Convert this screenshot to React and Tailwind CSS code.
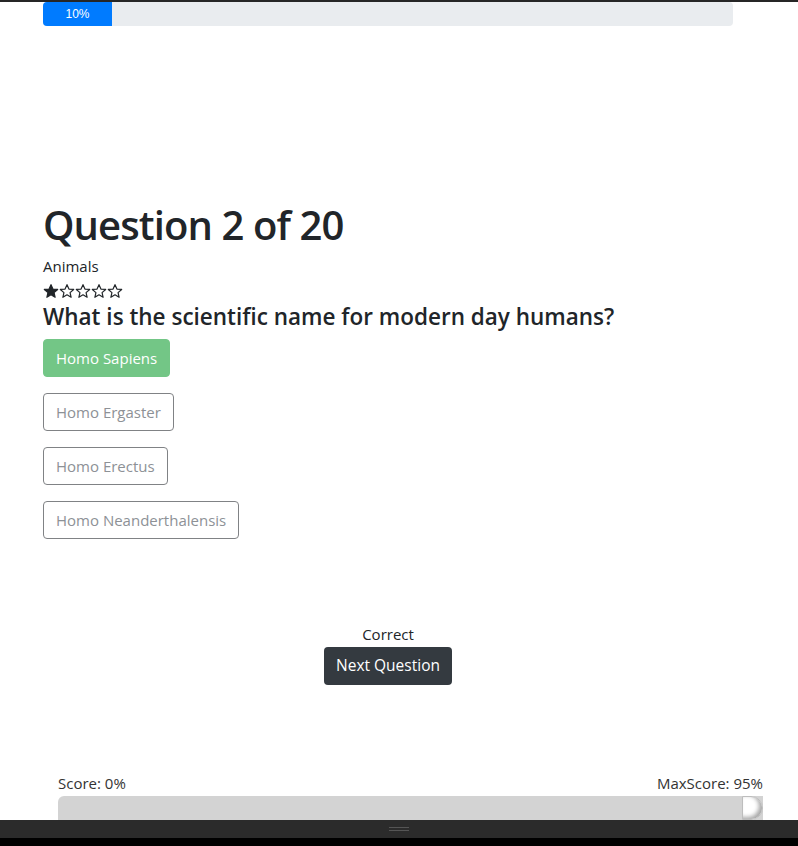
import React from "react";

const ANSWERS = [
  { label: "Homo Sapiens", correct: true },
  { label: "Homo Ergaster" },
  { label: "Homo Erectus" },
  { label: "Homo Neanderthalensis" },
];

function Star({ filled }) {
  return (
    <svg width="16" height="16" viewBox="0 0 24 24" className="shrink-0">
      <path
        d="M12 2.5l2.9 6.6 7.1.6-5.4 4.7 1.6 7-6.2-3.7-6.2 3.7 1.6-7L2 9.7l7.1-.6z"
        fill={filled ? "#212529" : "none"}
        stroke="#212529"
        strokeWidth="1.8"
        strokeLinejoin="round"
      />
    </svg>
  );
}

export default function App() {
  const difficulty = 1;
  return (
    <div className="h-screen flex flex-col bg-white text-[#212529] font-['Open_Sans',sans-serif] overflow-hidden">
      <div className="h-[2px] bg-[#262626] shrink-0" />

      <div className="px-[43px] pr-[65px]">
        <div className="h-6 rounded bg-[#e9ecef] flex overflow-hidden">
          <div className="w-[10%] bg-[#007bff] text-white text-xs flex items-center justify-center font-['Liberation_Sans',sans-serif]">
            10%
          </div>
        </div>
      </div>

      <div className="flex-1 flex flex-col">
        <div className="px-[43px] mt-[175px]">
          <h1 className="text-[40px] leading-[48px] font-semibold tracking-[-0.9px]">Question 2 of 20</h1>
          <div className="mt-[5px] text-[15px] leading-6">Animals</div>
          <div className="mt-[4px] flex items-center h-[18px]">
            {[1, 2, 3, 4, 5].map((n) => (
              <Star key={n} filled={n <= difficulty} />
            ))}
          </div>
          <h2 className="mt-[2px] text-[22.5px] leading-[30px] font-semibold">
            What is the scientific name for modern day humans?
          </h2>
          <div className="mt-[7px] flex flex-col items-start gap-4">
            {ANSWERS.map((a) =>
              a.correct ? (
                <button
                  key={a.label}
                  disabled
                  className="h-[38px] px-3 rounded bg-[#73c686] border border-[#73c686] text-white text-[15px]"
                >
                  {a.label}
                </button>
              ) : (
                <button
                  key={a.label}
                  disabled
                  className="h-[38px] px-3 rounded bg-white border border-[#808285] text-[#8d9196] text-[15px]"
                >
                  {a.label}
                </button>
              )
            )}
          </div>
        </div>

        <div className="mt-[85px] pr-[22px] flex flex-col items-center">
          <div className="text-[15px] leading-[20px]">Correct</div>
          <button className="mt-[3px] h-[38px] px-3 rounded bg-[#343a40] text-white text-[15.5px]">
            Next Question
          </button>
        </div>

        <div className="mt-auto pl-[58px] pr-[35px]">
          <div className="flex justify-between text-[15px] leading-[20px] text-[#333]">
            <span>Score: 0%</span>
            <span>MaxScore: 95%</span>
          </div>
          <div className="mt-[3px] h-6 flex rounded-tl-md bg-[#d3d3d3]">
            <div className="flex-1" />
            <div className="w-[21px] rounded-r-full bg-white shadow-[inset_-3px_-2px_4px_rgba(0,0,0,0.35)] border border-[#bdbdbd]" />
          </div>
        </div>
      </div>

      <div className="h-[18px] bg-[#2b2b2b] flex items-center justify-center shrink-0">
        <div className="flex flex-col gap-[2px]">
          <div className="w-[20px] h-px bg-[#555]" />
          <div className="w-[20px] h-px bg-[#555]" />
        </div>
      </div>
      <div className="h-2 bg-black shrink-0" />
    </div>
  );
}
